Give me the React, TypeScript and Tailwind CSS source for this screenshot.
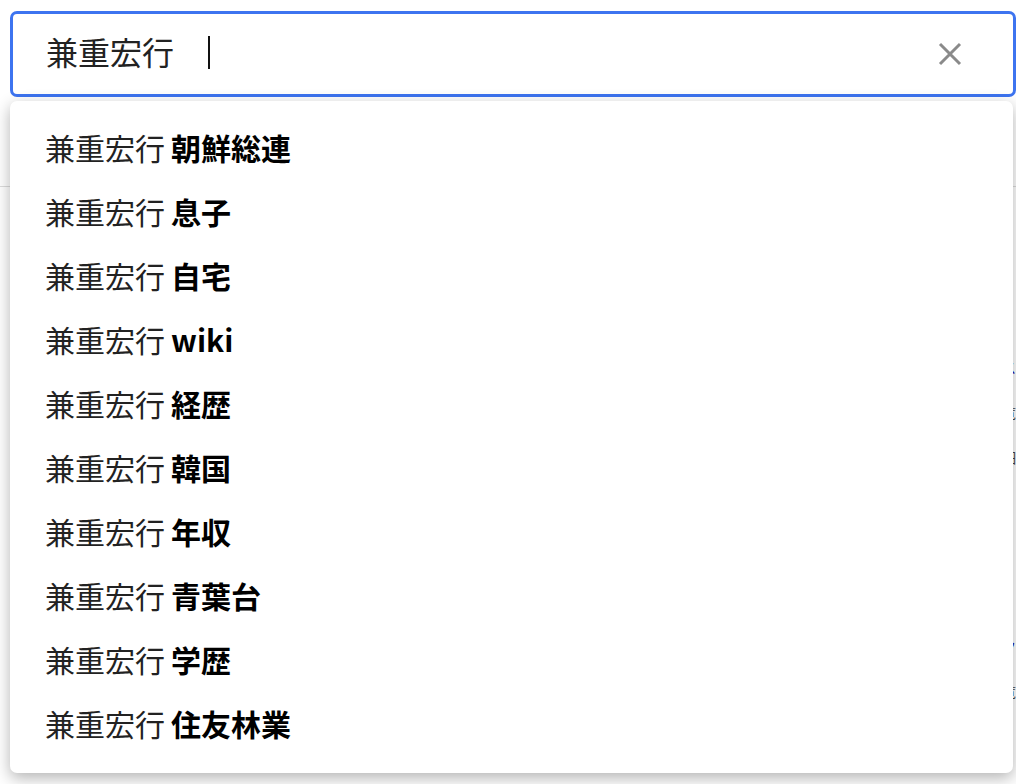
import React from 'react';

const suggestions = ['朝鮮総連', '息子', '自宅', 'wiki', '経歴', '韓国', '年収', '青葉台', '学歴', '住友林業'];

export default function App() {
  const query = '兼重宏行';

  return (
    <div className="relative h-[784px] w-[1016px] overflow-hidden bg-white font-['Noto_Sans_CJK_JP',sans-serif] text-[#222]">
      {/* Search box */}
      <div className="pl-[10px] pt-[11px]">
        <div className="flex h-[86px] w-[1006px] items-center rounded-[7px] border-[3px] border-[#3d74f0] pl-[33px] pr-[50px]">
          <span className="mb-[7px] text-[32px] leading-none">{query}</span>
          <span className="mb-[4px] ml-[34px] h-[33px] w-[2px] bg-[#111]" />
          <button className="ml-auto flex h-[26px] w-[26px] items-center justify-center">
            <svg width="24" height="24" viewBox="0 0 24 24" fill="none" stroke="#8a8a8a" strokeWidth="3">
              <path d="M2 2 L22 22 M22 2 L2 22" />
            </svg>
          </button>
        </div>
      </div>

      {/* Page underneath */}
      <div className="mt-[89px] border-t border-[#dcdcdc]">
        <div className="flex flex-col items-end gap-[24px] pt-[170px] pr-0 text-[14px]">
          <span className="text-[#1a0dab]">関連ニュース</span>
          <span className="text-[#444]">記事一覧</span>
          <span className="text-[#444]">詳細</span>
          <div className="h-[120px]" />
          <span className="text-[#1a0dab]">関連リンク</span>
          <span className="text-[#444]">一覧</span>
        </div>
      </div>

      {/* Suggestion dropdown */}
      <div className="absolute left-[10px] top-[101px] w-[1003px] rounded-[7px] bg-white pt-[14px] pb-[18px] shadow-[0_5px_16px_rgba(0,0,0,0.3)]">
        {suggestions.map((s) => (
          <div key={s} className="flex h-[64px] items-center pl-[35px] text-[30px] leading-none">
            <span>{query}</span>
            <span className="ml-[6px] font-bold text-black">{s}</span>
          </div>
        ))}
      </div>
    </div>
  );
}
